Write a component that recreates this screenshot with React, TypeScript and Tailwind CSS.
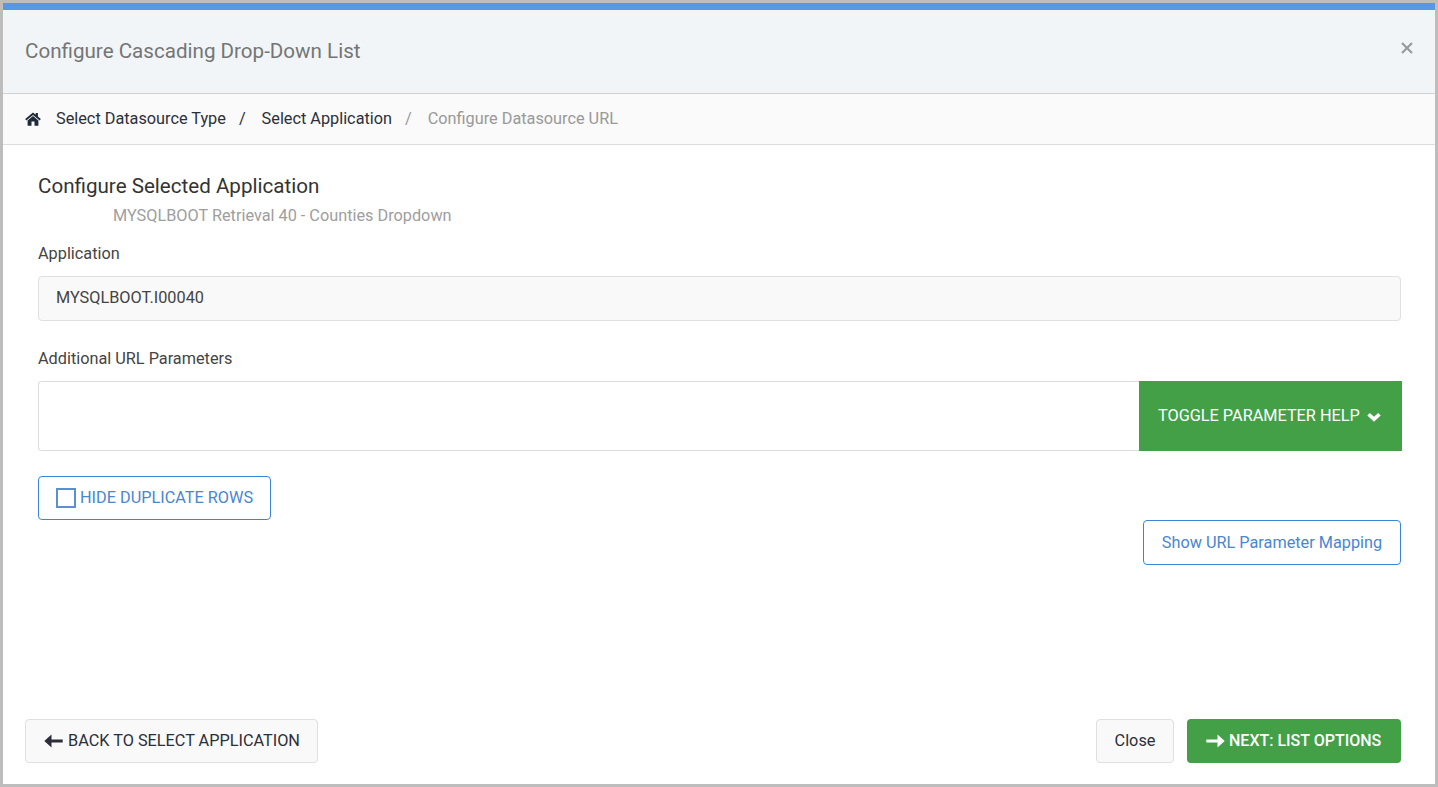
import React from 'react';

function HomeIcon() {
  return (
    <svg width="16" height="14" viewBox="0 0 16 14" className="fill-[#1f2a38]">
      <path d="M8 0.4 L0.2 7 L1.3 8.4 L8 2.9 L14.7 8.4 L15.8 7 L12.9 4.5 V1 H10.7 V2.8 Z" />
      <path d="M8 4 L2.6 8.4 V13.7 H6.5 V9.6 H9.5 V13.7 H13.4 V8.4 Z" />
    </svg>
  );
}

function ArrowIcon({ direction, className }: { direction: 'left' | 'right'; className: string }) {
  return (
    <svg width="19" height="14" viewBox="0 0 19 14" className={className}>
      {direction === 'left'
        ? <path d="M7.5 0.5 L0.3 7 L7.5 13.5 V8.4 H18.7 V5.6 H7.5 Z" />
        : <path d="M11.5 0.5 L18.7 7 L11.5 13.5 V8.4 H0.3 V5.6 H11.5 Z" />}
    </svg>
  );
}

export default function App() {
  return (
    <div className="h-[787px] w-[1438px] border-[3px] border-[#bdbdbd] bg-white flex flex-col font-['Roboto',sans-serif] text-[16.27px] text-[#333333]">
      <div className="h-[7px] bg-[#5599e4]" />

      {/* Title */}
      <div className="h-[84px] bg-[#f1f5f8] border-b border-[#d2d2d2] pl-[22px] pr-[22px] flex items-center justify-between">
        <h1 className="text-[20.6px] text-[#757575] font-normal">Configure Cascading Drop-Down List</h1>
        <svg width="12" height="12" viewBox="0 0 12 12" className="stroke-[#9a9a9a] mb-[7px]" strokeWidth="2.2">
          <path d="M1 1 L11 11 M11 1 L1 11" />
        </svg>
      </div>

      {/* Breadcrumb */}
      <div className="h-[51px] bg-[#fafafa] border-b border-[#dddddd] pl-[22px] flex items-center">
        <HomeIcon />
        <span className="ml-[15px] text-[#2c2f3a]">Select Datasource Type</span>
        <span className="ml-[13px] text-[#2c2f3a]">/</span>
        <span className="ml-[16px] text-[#2c2f3a]">Select Application</span>
        <span className="ml-[13px] text-[#999999]">/</span>
        <span className="ml-[16px] text-[#999999]">Configure Datasource URL</span>
      </div>

      {/* Body */}
      <div className="flex-1 flex flex-col pl-[35px] pr-[34px] pt-[28px]">
        <h2 className="text-[20.6px] leading-[26px] font-normal text-[#333333]">Configure Selected Application</h2>
        <p className="ml-[75px] mt-[5px] leading-[24px] text-[#9e9e9e]">MYSQLBOOT Retrieval 40 - Counties Dropdown</p>

        <label className="mt-[14px] leading-[24px] text-[#444444]">Application</label>
        <div className="mt-[10px] h-[45px] rounded border border-[#e0e0e0] bg-[#f9f9f9] pl-[17px] flex items-center text-[#444444]">
          MYSQLBOOT.I00040
        </div>

        <label className="mt-[26px] leading-[24px] text-[#444444]">Additional URL Parameters</label>
        <div className="mt-[10px] h-[70px] flex -mr-px">
          <div className="flex-1 border border-[#dddddd] border-r-0 rounded-l bg-white" />
          <button className="w-[263px] bg-[#43a047] text-white flex items-center pl-[19px]">
            TOGGLE PARAMETER HELP
            <svg width="14" height="10" viewBox="0 0 14 10" className="ml-[7px] mt-[2px] fill-white">
              <path d="M0.3 3.5 L2.8 1 L7 4.8 L11.2 1 L13.7 3.5 L7 9.8 Z" />
            </svg>
          </button>
        </div>

        <div className="mt-[25px] flex">
          <button className="h-[44px] w-[233px] rounded border border-[#3a85d6] text-[#4a86d0] flex items-center pl-[17px]">
            <span className="w-[20px] h-[20px] border-2 border-[#5b8fd0] mr-[4px]" />
            HIDE DUPLICATE ROWS
          </button>
        </div>

        <div className="flex justify-end">
          <button className="h-[45px] w-[258px] pt-px rounded border border-[#3a85d6] text-[#4a86d0]">
            Show URL Parameter Mapping
          </button>
        </div>

        {/* Footer */}
        <div className="mt-auto mb-[21px] -ml-[13px] flex items-center">
          <button className="h-[44px] w-[293px] rounded border border-[#e0e0e0] bg-[#f9f9f9] text-[#2c2f3a] flex items-center pl-[18px]">
            <ArrowIcon direction="left" className="fill-[#2c2f3a] mr-[5px]" />
            BACK TO SELECT APPLICATION
          </button>
          <button className="ml-auto h-[44px] w-[78px] rounded border border-[#e0e0e0] bg-[#f9f9f9] text-[#2c2f3a]">
            Close
          </button>
          <button className="ml-[13px] h-[44px] w-[214px] rounded bg-[#43a047] text-white text-[16px] font-medium flex items-center pl-[19px]">
            <ArrowIcon direction="right" className="fill-white mr-[4px]" />
            NEXT: LIST OPTIONS
          </button>
        </div>
      </div>
    </div>
  );
}
